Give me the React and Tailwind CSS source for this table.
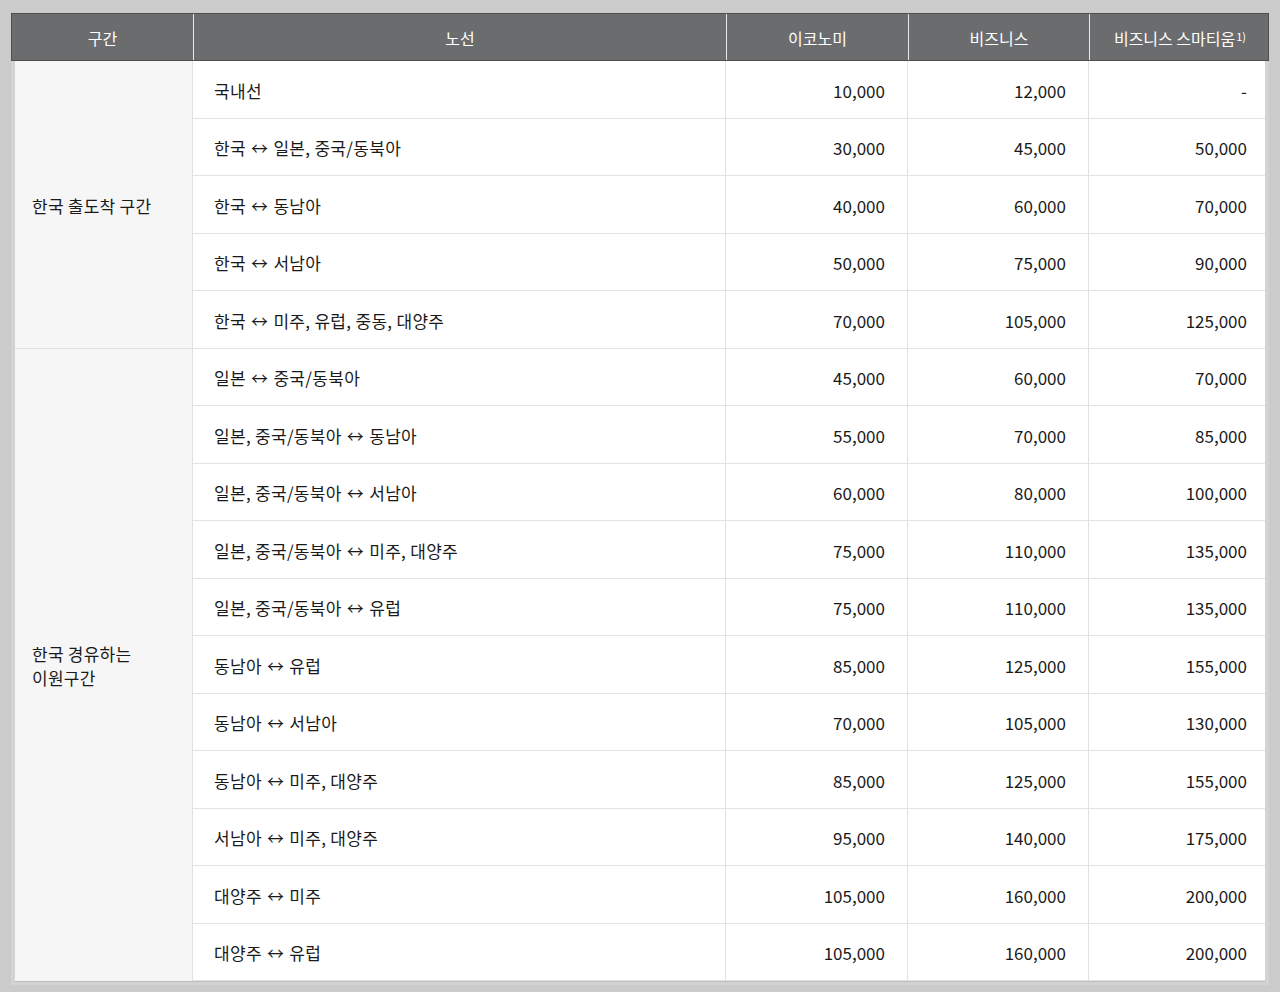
import React from "react";

const g1 = [
  ["국내선", "10,000", "12,000", "-"],
  ["한국 ↔ 일본, 중국/동북아", "30,000", "45,000", "50,000"],
  ["한국 ↔ 동남아", "40,000", "60,000", "70,000"],
  ["한국 ↔ 서남아", "50,000", "75,000", "90,000"],
  ["한국 ↔ 미주, 유럽, 중동, 대양주", "70,000", "105,000", "125,000"],
];
const g2 = [
  ["일본 ↔ 중국/동북아", "45,000", "60,000", "70,000"],
  ["일본, 중국/동북아 ↔ 동남아", "55,000", "70,000", "85,000"],
  ["일본, 중국/동북아 ↔ 서남아", "60,000", "80,000", "100,000"],
  ["일본, 중국/동북아 ↔ 미주, 대양주", "75,000", "110,000", "135,000"],
  ["일본, 중국/동북아 ↔ 유럽", "75,000", "110,000", "135,000"],
  ["동남아 ↔ 유럽", "85,000", "125,000", "155,000"],
  ["동남아 ↔ 서남아", "70,000", "105,000", "130,000"],
  ["동남아 ↔ 미주, 대양주", "85,000", "125,000", "155,000"],
  ["서남아 ↔ 미주, 대양주", "95,000", "140,000", "175,000"],
  ["대양주 ↔ 미주", "105,000", "160,000", "200,000"],
  ["대양주 ↔ 유럽", "105,000", "160,000", "200,000"],
];

function Route({ text }) {
  const parts = text.split("↔");
  if (parts.length === 1) return text;
  return (
    <>
      {parts[0]}
      <span className="inline-block mx-[1px]">↔</span>
      {parts[1]}
    </>
  );
}

function Row({ r }) {
  return (
    <>
      <div className="flex items-center pl-[21px] pt-[2px] bg-white border-l border-b border-[#e2e2e2] tracking-[0.3px] whitespace-pre">
        <Route text={r[0]} />
      </div>
      <div className="flex items-center justify-end pr-[22px] pt-[2px] bg-white border-l border-b border-[#e2e2e2]">{r[1]}</div>
      <div className="flex items-center justify-end pr-[22px] pt-[2px] bg-white border-l border-b border-[#e2e2e2]">{r[2]}</div>
      <div className="flex items-center justify-end pr-[18px] pt-[2px] bg-white border-l border-b border-[#e2e2e2]">{r[3]}</div>
    </>
  );
}

export default function App() {
  return (
    <div
      className="w-[1280px] h-[992px] bg-[#cbcbcb] pt-[13px] pl-[11px]"
      style={{ fontFamily: '"Noto Sans CJK KR", "Noto Sans", sans-serif' }}
    >
      <div className="w-[1258px]">
        <div className="grid grid-cols-[181px_533px_182px_181px_181px] h-[48px] bg-[#6b6c6e] border border-[#4f4f50] text-white text-[16px]">
          <div className="flex items-center justify-center pt-[2px]">구간</div>
          <div className="flex items-center justify-center pt-[2px] border-l border-[#e8e8e8]">노선</div>
          <div className="flex items-center justify-center pt-[2px] border-l border-[#e8e8e8]">이코노미</div>
          <div className="flex items-center justify-center pt-[2px] border-l border-[#e8e8e8]">비즈니스</div>
          <div className="flex items-center justify-center pt-[2px] border-l border-[#e8e8e8]">
            비즈니스 스마티움<sup className="text-[11px] relative -top-[2px] ml-[1px]">1)</sup>
          </div>
        </div>
        <div className="px-[4px] bg-[#d3d3d3] pb-[3px]">
          <div className="grid grid-cols-[177px_533px_182px_181px_177px] auto-rows-[57.5px] text-[17px] text-[#1a1a1a] border-b border-[#bdbdbd]">
            <div className="row-span-5 flex items-center pl-[17px] pt-[2px] bg-[#f6f6f6] border-b border-[#e2e2e2] tracking-[0.25px]">
              한국 출도착 구간
            </div>
            {g1.map((r, i) => (
              <Row key={"a" + i} r={r} />
            ))}
            <div className="row-[span_11_/_span_11] flex items-center pl-[17px] pt-[2px] bg-[#f6f6f6] leading-[24px] tracking-[0.25px]">
              한국 경유하는
              <br />
              이원구간
            </div>
            {g2.map((r, i) => (
              <Row key={"b" + i} r={r} />
            ))}
          </div>
        </div>
      </div>
    </div>
  );
}
